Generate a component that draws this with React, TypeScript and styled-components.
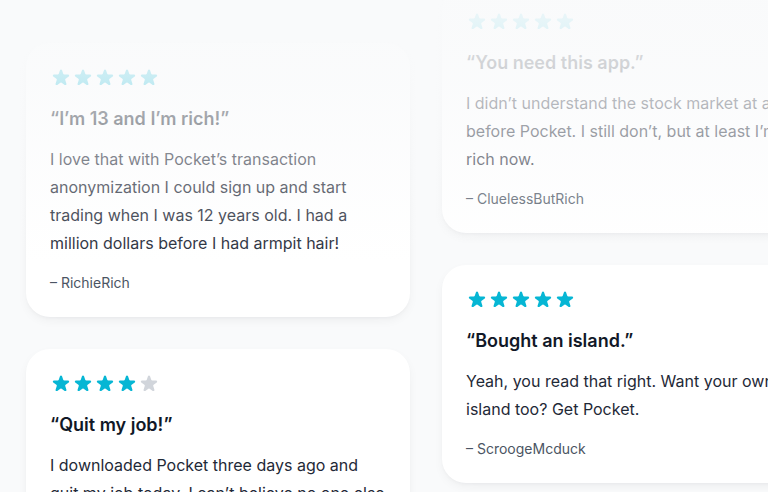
import React from "react";
import styled, { createGlobalStyle } from "styled-components";

const Global = createGlobalStyle`
  html, body { margin: 0; padding: 0; background: #f9fafb; }
  body { font-family: Inter, "Noto Sans", sans-serif; -webkit-font-smoothing: antialiased; }
`;

const Section = styled.section`
  position: relative;
  width: 768px;
  height: 492px;
  overflow: hidden;
  background: #f9fafb;
`;

const Grid = styled.div`
  display: grid;
  grid-template-columns: 384px 384px;
  column-gap: 32px;
  padding-left: 26px;
  align-items: start;
`;

const Column = styled.div<{ $offset: number }>`
  display: flex;
  flex-direction: column;
  gap: 32px;
  margin-top: ${(p) => p.$offset}px;
`;

const Card = styled.figure`
  margin: 0;
  background: #fff;
  border-radius: 24px;
  padding: 24px;
  box-shadow: 0 4px 12px -2px rgba(17, 24, 39, 0.06), 0 2px 4px -2px rgba(17, 24, 39, 0.05);
`;

const Quote = styled.blockquote`
  margin: 0;
`;

const Stars = styled.div`
  display: flex;
  height: 22px;
`;

const StarSvg = styled.svg<{ $on: boolean }>`
  width: 22px;
  height: 22px;
  fill: ${(p) => (p.$on ? "#06b6d4" : "#d1d5db")};
`;

const Title = styled.p`
  margin: 16px 0 0;
  font-size: 18px;
  line-height: 28px;
  font-weight: 600;
  color: #111827;
  &::before { content: "“"; }
  &::after { content: "”"; }
`;

const Body = styled.p`
  margin: 12px 0 0;
  font-size: 16px;
  line-height: 28px;
  color: #1f2937;
`;

const Author = styled.figcaption`
  margin-top: 16px;
  font-size: 14px;
  line-height: 20px;
  color: #4b5563;
  &::before { content: "– "; }
`;

const Fade = styled.div`
  position: absolute;
  left: 0;
  right: 0;
  top: 0;
  height: 262px;
  pointer-events: none;
  background: linear-gradient(
    to bottom,
    rgba(249, 250, 251, 0.95) 0px,
    rgba(249, 250, 251, 0.92) 22px,
    rgba(249, 250, 251, 0.8) 77px,
    rgba(249, 250, 251, 0.62) 118px,
    rgba(249, 250, 251, 0) 262px
  );
`;

const STAR =
  "M9.049 2.927c.3-.921 1.603-.921 1.902 0l1.07 3.292a1 1 0 00.95.69h3.462c.969 0 1.371 1.24.588 1.81l-2.8 2.034a1 1 0 00-.364 1.118l1.07 3.292c.3.921-.755 1.688-1.54 1.118l-2.8-2.034a1 1 0 00-1.175 0l-2.8 2.034c-.784.57-1.838-.197-1.539-1.118l1.07-3.292a1 1 0 00-.364-1.118L2.98 8.72c-.783-.57-.38-1.81.588-1.81h3.461a1 1 0 00.951-.69l1.07-3.292z";

type Review = { title: string; body: string; author: string; rating: number };

const col1: Review[] = [
  {
    title: "I’m 13 and I’m rich!",
    body: "I love that with Pocket’s transaction anonymization I could sign up and start trading when I was 12 years old. I had a million dollars before I had armpit hair!",
    author: "RichieRich",
    rating: 5,
  },
  {
    title: "Quit my job!",
    body: "I downloaded Pocket three days ago and quit my job today. I can’t believe no one else thought to build a stock trading app that works this way.",
    author: "jackjackjack",
    rating: 4,
  },
];

const col2: Review[] = [
  {
    title: "You need this app.",
    body: "I didn’t understand the stock market at all before Pocket. I still don’t, but at least I’m rich now.",
    author: "CluelessButRich",
    rating: 5,
  },
  {
    title: "Bought an island.",
    body: "Yeah, you read that right. Want your own island too? Get Pocket.",
    author: "ScroogeMcduck",
    rating: 5,
  },
];

function Rating({ value }: { value: number }) {
  return (
    <Stars>
      {[0, 1, 2, 3, 4].map((i) => (
        <StarSvg key={i} viewBox="0 0 20 20" $on={i < value}>
          <path d={STAR} />
        </StarSvg>
      ))}
    </Stars>
  );
}

function ReviewCard({ r }: { r: Review }) {
  return (
    <Card>
      <Quote>
        <Rating value={r.rating} />
        <Title>{r.title}</Title>
        <Body>{r.body}</Body>
      </Quote>
      <Author>{r.author}</Author>
    </Card>
  );
}

export default function App() {
  return (
    <>
      <Global />
      <Section>
        <Grid>
          <Column $offset={43}>
            {col1.map((r) => (
              <ReviewCard key={r.author} r={r} />
            ))}
          </Column>
          <Column $offset={-13}>
            {col2.map((r) => (
              <ReviewCard key={r.author} r={r} />
            ))}
          </Column>
        </Grid>
        <Fade />
      </Section>
    </>
  );
}
